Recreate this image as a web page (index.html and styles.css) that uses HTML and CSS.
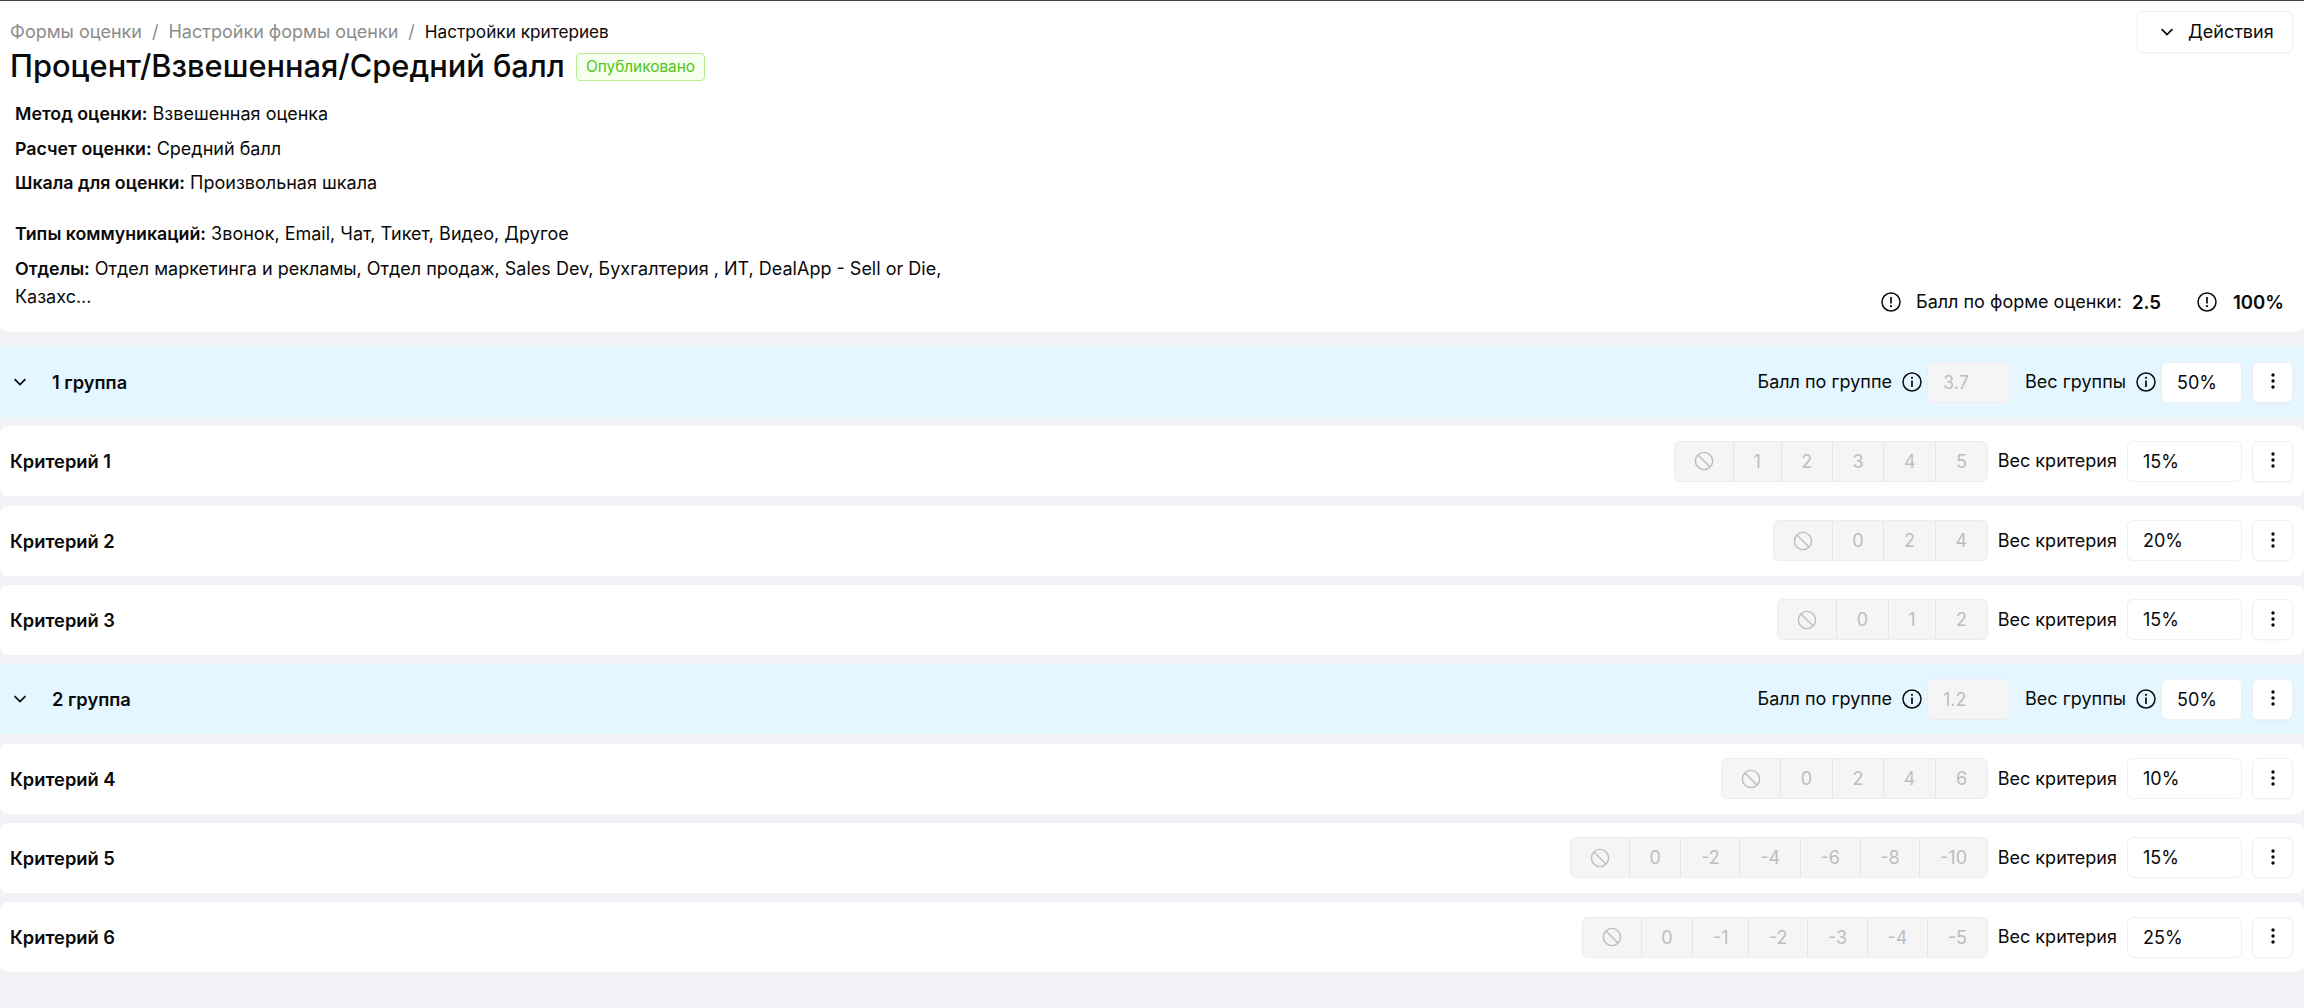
FILE: index.html
```html
<!DOCTYPE html>
<html lang="ru">
<head>
<meta charset="utf-8">
<title>Настройки критериев</title>
<link rel="stylesheet" href="styles.css">
</head>
<body>
<svg class="defs" aria-hidden="true">
  <symbol id="chev" viewBox="0 0 20 20"><path d="M4.6 7.2 10 12.6l5.4-5.4" fill="none" stroke="currentColor" stroke-width="1.7"/></symbol>
  <symbol id="warn" viewBox="0 0 20 20"><circle cx="10" cy="10" r="9" fill="none" stroke="currentColor" stroke-width="1.5"/><path d="M10 5v6.4" stroke="currentColor" stroke-width="1.7"/><circle cx="10" cy="14.2" r="1.1" fill="currentColor"/></symbol>
  <symbol id="info" viewBox="0 0 20 20"><circle cx="10" cy="10" r="9" fill="none" stroke="currentColor" stroke-width="1.5"/><path d="M10 8.6V15" stroke="currentColor" stroke-width="1.7"/><circle cx="10" cy="5.8" r="1.1" fill="currentColor"/></symbol>
  <symbol id="stop" viewBox="0 0 20 20"><circle cx="10" cy="10" r="8.6" fill="none" stroke="currentColor" stroke-width="1.4"/><path d="M4 4l12 12" stroke="currentColor" stroke-width="1.4"/></symbol>
  <symbol id="dots" viewBox="0 0 20 20"><circle cx="10" cy="3" r="1.7" fill="currentColor"/><circle cx="10" cy="9" r="1.7" fill="currentColor"/><circle cx="10" cy="15" r="1.7" fill="currentColor"/></symbol>
</svg>
<div class="page">
  <header class="head">
    <div class="head-left">
      <nav class="crumbs"><span class="crumb">Формы оценки</span><span class="sep">/</span><span class="crumb">Настройки формы оценки</span><span class="sep">/</span><span class="crumb-cur">Настройки критериев</span></nav>
      <div class="title-row"><h1 class="title">Процент/Взвешенная/Средний балл</h1><span class="tag">Опубликовано</span></div>
      <div class="meta">
        <p class="meta-line"><b>Метод оценки:</b> Взвешенная оценка</p>
        <p class="meta-line"><b>Расчет оценки:</b> Средний балл</p>
        <p class="meta-line"><b>Шкала для оценки:</b> Произвольная шкала</p>
        <p class="meta-line meta-gap"><b>Типы коммуникаций:</b> Звонок, Email, Чат, Тикет, Видео, Другое</p>
        <p class="meta-wrap"><b>Отделы:</b> Отдел маркетинга и рекламы, Отдел продаж, Sales Dev, Бухгалтерия , ИТ, DealApp - Sell or Die, Казахс...</p>
      </div>
    </div>
    <div class="head-right">
      <button class="actions"><svg class="ic-chev"><use href="#chev"/></svg>Действия</button>
      <div class="totals">
        <svg class="ic"><use href="#warn"/></svg><span class="total-label">Балл по форме оценки:</span><b class="total-val">2.5</b>
        <svg class="ic ic-second"><use href="#warn"/></svg><b class="total-val">100%</b>
      </div>
    </div>
  </header>

  <main class="list">
    <section class="row group">
      <svg class="ic-chev group-chev"><use href="#chev"/></svg><span class="name">1 группа</span>
      <div class="controls">
        <span class="label">Балл по группе</span><svg class="ic"><use href="#info"/></svg><div class="score">3.7</div>
        <span class="label label-w">Вес группы</span><svg class="ic"><use href="#info"/></svg><div class="weight weight-g">50%</div>
        <button class="more"><svg class="ic"><use href="#dots"/></svg></button>
      </div>
    </section>
    <section class="row">
      <span class="name">Критерий 1</span>
      <div class="controls">
        <div class="seg"><span class="cell cell-i"><svg class="ic"><use href="#stop"/></svg></span><span class="cell">1</span><span class="cell">2</span><span class="cell">3</span><span class="cell">4</span><span class="cell">5</span></div>
        <span class="label">Вес критерия</span><div class="weight">15%</div>
        <button class="more"><svg class="ic"><use href="#dots"/></svg></button>
      </div>
    </section>
    <section class="row">
      <span class="name">Критерий 2</span>
      <div class="controls">
        <div class="seg"><span class="cell cell-i"><svg class="ic"><use href="#stop"/></svg></span><span class="cell">0</span><span class="cell">2</span><span class="cell">4</span></div>
        <span class="label">Вес критерия</span><div class="weight">20%</div>
        <button class="more"><svg class="ic"><use href="#dots"/></svg></button>
      </div>
    </section>
    <section class="row">
      <span class="name">Критерий 3</span>
      <div class="controls">
        <div class="seg"><span class="cell cell-i"><svg class="ic"><use href="#stop"/></svg></span><span class="cell">0</span><span class="cell">1</span><span class="cell">2</span></div>
        <span class="label">Вес критерия</span><div class="weight">15%</div>
        <button class="more"><svg class="ic"><use href="#dots"/></svg></button>
      </div>
    </section>
    <section class="row group">
      <svg class="ic-chev group-chev"><use href="#chev"/></svg><span class="name">2 группа</span>
      <div class="controls">
        <span class="label">Балл по группе</span><svg class="ic"><use href="#info"/></svg><div class="score">1.2</div>
        <span class="label label-w">Вес группы</span><svg class="ic"><use href="#info"/></svg><div class="weight weight-g">50%</div>
        <button class="more"><svg class="ic"><use href="#dots"/></svg></button>
      </div>
    </section>
    <section class="row">
      <span class="name">Критерий 4</span>
      <div class="controls">
        <div class="seg"><span class="cell cell-i"><svg class="ic"><use href="#stop"/></svg></span><span class="cell">0</span><span class="cell">2</span><span class="cell">4</span><span class="cell">6</span></div>
        <span class="label">Вес критерия</span><div class="weight">10%</div>
        <button class="more"><svg class="ic"><use href="#dots"/></svg></button>
      </div>
    </section>
    <section class="row">
      <span class="name">Критерий 5</span>
      <div class="controls">
        <div class="seg"><span class="cell cell-i"><svg class="ic"><use href="#stop"/></svg></span><span class="cell">0</span><span class="cell">-2</span><span class="cell">-4</span><span class="cell">-6</span><span class="cell">-8</span><span class="cell">-10</span></div>
        <span class="label">Вес критерия</span><div class="weight">15%</div>
        <button class="more"><svg class="ic"><use href="#dots"/></svg></button>
      </div>
    </section>
    <section class="row">
      <span class="name">Критерий 6</span>
      <div class="controls">
        <div class="seg"><span class="cell cell-i"><svg class="ic"><use href="#stop"/></svg></span><span class="cell">0</span><span class="cell">-1</span><span class="cell">-2</span><span class="cell">-3</span><span class="cell">-4</span><span class="cell">-5</span></div>
        <span class="label">Вес критерия</span><div class="weight">25%</div>
        <button class="more"><svg class="ic"><use href="#dots"/></svg></button>
      </div>
    </section>
  </main>
</div>
</body>
</html>
```
FILE: styles.css
```css
* { box-sizing: border-box; }
html, body { margin: 0; height: 100%; }
body {
  background: #f0f2f5;
  color: #0a0a0a;
  font-family: Inter, "Noto Sans", sans-serif;
  font-size: 18px;
  line-height: 28px;
  overflow: hidden;
}
.defs { display: none; }
.page { border-top: 1px solid #3c434a; }

.head {
  background: #fff;
  border-radius: 0 0 8px 8px;
  height: 331px;
  padding: 10px 11px 16px 10px;
  display: flex;
  justify-content: space-between;
}
.head-left { display: flex; flex-direction: column; }
.head-right { display: flex; flex-direction: column; align-items: flex-end; justify-content: space-between; }

.crumbs { display: flex; height: 40px; align-items: center; padding-top: 2px; }
.crumb { color: #8c8c8c; }
.crumb-cur { color: #0a0a0a; font-size: 17.2px; }
.sep { color: #8c8c8c; margin: 0 10px; }

.title-row { display: flex; align-items: center; gap: 11px; height: 36px; margin-top: -3px; }
.title { margin: 0; font-size: 30.8px; font-weight: 500; line-height: 36px; }
.tag {
  color: #52c41a;
  background: #f6ffed;
  border: 1px solid #b7eb8f;
  border-radius: 4px;
  font-size: 15.4px;
  line-height: 26px;
  padding: 0 9px;
  margin-top: 1px;
}

.meta { padding-left: 5px; margin-top: 16px; width: 945px; }
.meta-line { margin: 0 0 6.5px; }
.meta-gap { margin-top: 23px; margin-bottom: 7px; }
.meta-wrap { margin: 0; }
.meta b { font-size: 17.8px; }
b { font-weight: 600; }

.actions {
  display: flex;
  align-items: center;
  width: 156px;
  height: 42px;
  padding: 0 0 0 19px;
  background: #fff;
  border: 1px solid #f0f0f0;
  border-radius: 6px;
  box-shadow: 0 1px 2px rgba(0,0,0,.03);
  font: inherit;
  color: inherit;
}
.ic-chev { width: 20px; height: 20px; margin-right: 11px; flex: none; }

.totals { display: flex; align-items: center; padding-right: 9px; }
.ic { width: 20px; height: 20px; flex: none; }
.total-label { margin: 0 10px 0 15px; }
.total-val { font-weight: 600; font-size: 18.6px; }
.ic-second { margin: 0 16px 0 36px; }

.list { display: flex; flex-direction: column; gap: 9.33px; padding-top: 15px; }
.row {
  height: 70px;
  background: #fff;
  border-radius: 8px;
  padding: 0 11px 0 10px;
  display: flex;
  align-items: center;
}
.group { background: #e4f6ff; border-radius: 0; }
.group-chev { margin-left: 0; margin-right: 22px; }
.name { font-weight: 600; font-size: 18.3px; }

.controls { margin-left: auto; display: flex; align-items: center; height: 41px; }
.label { margin-right: 10px; }
.label-w { margin-left: 15px; }
.score {
  width: 83px;
  height: 41px;
  margin-left: 5px;
  padding-left: 15px;
  background: #f5f5f5;
  border: 1px solid #ededed;
  border-radius: 6px;
  color: #bdbdbd;
  line-height: 39px;
}
.weight {
  width: 115px;
  height: 41px;
  padding-left: 15px;
  background: #fff;
  border: 1px solid #f0f0f0;
  border-radius: 6px;
  line-height: 39px;
}
.weight-g { width: 81px; margin-left: 5px; }
.more {
  width: 41px;
  height: 41px;
  margin-left: 10px;
  padding: 0;
  display: flex;
  align-items: center;
  justify-content: center;
  background: #fff;
  border: 1px solid #f0f0f0;
  border-radius: 6px;
  box-shadow: 0 1px 2px rgba(0,0,0,.03);
  color: inherit;
}

.seg {
  display: flex;
  height: 41px;
  margin-right: 10px;
  background: #f5f5f5;
  border: 1px solid #ededed;
  border-radius: 6px;
  color: #bdbdbd;
}
.cell {
  padding: 0 19.7px;
  line-height: 39px;
  border-left: 1px solid #e6e6e6;
}
.cell-i {
  border-left: 0;
  padding: 0 19px;
  display: flex;
  align-items: center;
}
```
